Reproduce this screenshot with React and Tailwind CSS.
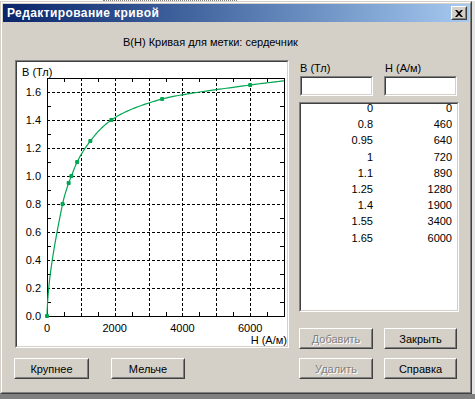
import React from 'react';

// Data points of the B(H) curve
const points = [
  [0, 0],
  [460, 0.8],
  [640, 0.95],
  [720, 1],
  [890, 1.1],
  [1280, 1.25],
  [1900, 1.4],
  [3400, 1.55],
  [6000, 1.65],
];

// plot mapping (page coordinates)
const X0 = 47;
const Y0 = 316;
const KX = 237 / 7000;
const KY = 140;
const px = (h) => X0 + h * KX;
const py = (b) => Y0 - b * KY;

// monotone cubic of H as a function of B
const buildCurve = () => {
  const pts = [...points, [7000, 1.68]];
  const xs = pts.map((p) => p[1]);
  const ys = pts.map((p) => p[0]);
  const n = xs.length;
  const d = [];
  for (let i = 0; i < n - 1; i++) d.push((ys[i + 1] - ys[i]) / (xs[i + 1] - xs[i]));
  const m = new Array(n);
  m[0] = 100;
  m[n - 1] = d[n - 2];
  for (let i = 1; i < n - 1; i++) {
    const h0 = xs[i] - xs[i - 1];
    const h1 = xs[i + 1] - xs[i];
    const w1 = 2 * h1 + h0;
    const w2 = h1 + 2 * h0;
    m[i] = (w1 + w2) / (w1 / d[i - 1] + w2 / d[i]);
  }
  let path = '';
  for (let i = 0; i < n - 1; i++) {
    const hh = xs[i + 1] - xs[i];
    for (let s = 0; s <= 30; s++) {
      const t = s / 30;
      const t2 = t * t;
      const t3 = t2 * t;
      const H =
        (2 * t3 - 3 * t2 + 1) * ys[i] +
        (t3 - 2 * t2 + t) * hh * m[i] +
        (-2 * t3 + 3 * t2) * ys[i + 1] +
        (t3 - t2) * hh * m[i + 1];
      const B = xs[i] + t * hh;
      const x = Math.min(px(H), 284);
      path += `${path ? 'L' : 'M'}${x.toFixed(2)} ${py(B).toFixed(2)} `;
    }
  }
  return path;
};

const curvePath = buildCurve();

const Chart = () => {
  const vLines = [1, 2, 3, 4, 5, 6].map((k) => Math.round(px(k * 1000)) + 0.5);
  const hLines = [1, 2, 3, 4, 5, 6, 7, 8].map((k) => Math.round(py(k * 0.2)) + 0.5);
  const xMinor = [0.5, 1.5, 2.5, 3.5, 4.5, 5.5, 6.5].map((k) => Math.round(px(k * 1000)) + 0.5);
  const yMinor = [0.1, 0.3, 0.5, 0.7, 0.9, 1.1, 1.3, 1.5].map((b) => Math.round(py(b)) + 0.5);
  const yLabels = ['0.0', '0.2', '0.4', '0.6', '0.8', '1.0', '1.2', '1.4', '1.6'];
  const xLabels = [0, 2000, 4000, 6000];

  return (
    <svg width="270" height="284" viewBox="17 62 270 284" className="block" style={{ fontFamily: '"Liberation Sans", Arial, sans-serif' }}>
      {/* dashed grid */}
      {vLines.map((x) => (
        <line key={'v' + x} x1={x} y1="78" x2={x} y2="316" stroke="#000" strokeDasharray="3 2" />
      ))}
      {hLines.map((y) => (
        <line key={'h' + y} x1="47" y1={y} x2="284" y2={y} stroke="#000" strokeDasharray="3 2" />
      ))}
      {/* minor ticks */}
      {xMinor.map((x) => (
        <g key={'xm' + x}>
          <line x1={x} y1="78" x2={x} y2="82" stroke="#000" />
          <line x1={x} y1="316" x2={x} y2="312" stroke="#000" />
        </g>
      ))}
      {yMinor.map((y) => (
        <g key={'ym' + y}>
          <line x1="47" y1={y} x2="51" y2={y} stroke="#000" />
          <line x1="284" y1={y} x2="280" y2={y} stroke="#000" />
        </g>
      ))}
      {/* frame */}
      <rect x="47.5" y="78.5" width="237" height="238" fill="none" stroke="#000" />
      {/* curve */}
      <path d={curvePath} fill="none" stroke="#00a651" strokeWidth="1.2" />
      {points.map(([h, b]) => (
        <rect key={h} x={px(h) - 2} y={py(b) - 2} width="4" height="4" rx="1" fill="#00a651" />
      ))}
      {/* labels */}
      <text x="22" y="76" fontSize="11" fill="#000">B (Тл)</text>
      {yLabels.map((l, i) => (
        <text key={l} x="41" y={py(i * 0.2) + 4} fontSize="11" textAnchor="end" fill="#000">{l}</text>
      ))}
      {xLabels.map((h) => (
        <text key={h} x={px(h)} y="332" fontSize="11" textAnchor="middle" fill="#000">{h}</text>
      ))}
      <text x="287" y="344" fontSize="11" textAnchor="end" fill="#000">H (А/м)</text>
    </svg>
  );
};

const Btn = ({ children, disabled, className = '' }) => (
  <div className={`h-[21px] border border-t-white border-l-white border-r-[#404040] border-b-[#404040] ${className}`}>
    <div className="h-full border border-t-[#d4d0c8] border-l-[#d4d0c8] border-r-[#808080] border-b-[#808080] flex items-center justify-center">
      <span className={disabled ? 'text-[#808080] [text-shadow:1px_1px_0_#fff]' : 'text-black'}>{children}</span>
    </div>
  </div>
);

const Sunken = ({ children, className = '' }) => (
  <div className={`border border-t-[#808080] border-l-[#808080] border-r-white border-b-white ${className}`}>
    <div className="h-full border border-t-[#404040] border-l-[#404040] border-r-[#d4d0c8] border-b-[#d4d0c8] bg-white">
      {children}
    </div>
  </div>
);

const App = () => {
  return (
    <div className="w-[475px] h-[399px] bg-[#808080] overflow-hidden text-[11px] leading-[14px] text-black" style={{ fontFamily: '"Liberation Sans", Arial, sans-serif' }}>
      {/* background strip above the dialog */}
      <div className="h-px bg-white flex">
        <div className="ml-[103px] w-[134px] border-b border-dotted border-[#808080]" />
      </div>
      <div className="flex">
        {/* dialog window */}
        <div className="w-[472px] h-[393px] bg-[#d4d0c8] border border-t-[#d4d0c8] border-l-[#d4d0c8] border-r-[#404040] border-b-[#404040]">
          <div className="h-full border border-t-white border-l-white border-r-[#808080] border-b-[#808080] p-px flex flex-col">
            {/* title bar */}
            <div className="h-[18px] flex items-center bg-gradient-to-r from-[#0a246a] to-[#a6caf0] pl-[4px] pr-[2px]">
              <span className="text-white font-bold text-[12px] tracking-[0.4px] flex-1">Редактирование кривой</span>
              <div className="w-[16px] h-[14px] border border-t-white border-l-white border-r-[#404040] border-b-[#404040] bg-[#d4d0c8]">
                <div className="h-full border border-t-[#d4d0c8] border-l-[#d4d0c8] border-r-[#808080] border-b-[#808080] flex items-center justify-center">
                  <svg width="8" height="7" viewBox="0 0 8 7">
                    <path d="M0 0h2l2 2 2-2h2L5 3.5 8 7H6L4 5 2 7H0l3-3.5z" fill="#000" />
                  </svg>
                </div>
              </div>
            </div>

            {/* client area */}
            <div className="flex-1 pt-[13px]">
              <div className="h-[14px] pl-[120px]">B(H) Кривая для метки: сердечник</div>
              <div className="flex mt-[11px] pl-[12px]">
                {/* left column: chart and zoom buttons */}
                <div className="w-[274px]">
                  <Sunken className="h-[288px]">
                    <Chart />
                  </Sunken>
                  <div className="flex mt-[10px] -ml-px">
                    <Btn className="w-[75px]">Крупнее</Btn>
                    <Btn className="w-[74px] ml-[22px]">Мельче</Btn>
                  </div>
                </div>

                {/* right column: inputs, table and buttons */}
                <div className="w-[160px] ml-[10px] pt-[2px]">
                  <div className="flex h-[12px] leading-[12px]">
                    <div className="w-[85px] pl-px">B (Тл)</div>
                    <div className="pl-px">H (А/м)</div>
                  </div>
                  <div className="flex mt-[2px]">
                    <Sunken className="w-[73px] h-[20px] ml-px" />
                    <Sunken className="w-[73px] h-[20px] ml-[11px]" />
                  </div>
                  <Sunken className="h-[210px] mt-[6px]">
                    <div className="-mt-[2px]">
                      {points.map(([h, b]) => (
                        <div key={h} className="flex h-[16.2px] leading-[13px]">
                          <div className="w-[72px] text-right">{b}</div>
                          <div className="w-[79px] text-right">{h}</div>
                        </div>
                      ))}
                    </div>
                  </Sunken>
                  <div className="flex mt-[16px]">
                    <Btn disabled className="w-[74px]">Добавить</Btn>
                    <Btn className="w-[73px] ml-[11px]">Закрыть</Btn>
                  </div>
                  <div className="flex mt-[9px]">
                    <Btn disabled className="w-[74px]">Удалить</Btn>
                    <Btn className="w-[73px] ml-[11px]">Справка</Btn>
                  </div>
                </div>
              </div>
            </div>
          </div>
        </div>
        {/* strip right of the dialog */}
        <div className="w-[3px] bg-[#e4e4e4]" />
      </div>
    </div>
  );
};

export default App;
